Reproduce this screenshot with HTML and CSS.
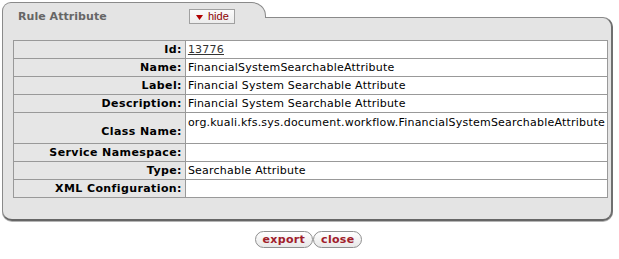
FILE: index.html
```html
<!DOCTYPE html>
<html>
<head>
<meta charset="utf-8">
<link rel="stylesheet" href="styles.css">
</head>
<body>
<div class="page">
  <div class="panel">
    <div class="tab">
      <span class="tab-title">Rule Attribute</span>
      <button class="hide-btn"><svg class="tri" width="7" height="5" viewBox="0 0 7 5"><polygon points="0,0 7,0 3.5,5" fill="#b00000"/></svg>hide</button>
    </div>
    <div class="panel-body">
      <table class="datatable">
        <tr><th>Id:</th><td><a href="#" class="link">13776</a></td></tr>
        <tr><th>Name:</th><td>FinancialSystemSearchableAttribute</td></tr>
        <tr><th>Label:</th><td>Financial System Searchable Attribute</td></tr>
        <tr><th>Description:</th><td>Financial System Searchable Attribute</td></tr>
        <tr class="tall"><th>Class Name:</th><td class="top">org.kuali.kfs.sys.document.workflow.FinancialSystemSearchableAttribute</td></tr>
        <tr><th>Service Namespace:</th><td></td></tr>
        <tr><th>Type:</th><td>Searchable Attribute</td></tr>
        <tr><th>XML Configuration:</th><td></td></tr>
      </table>
    </div>
  </div>
  <div class="actions">
    <button class="pill">export</button><button class="pill">close</button>
  </div>
</div>
</body>
</html>
```
FILE: styles.css
```css
html, body {
  margin: 0;
  padding: 0;
  background: #ffffff;
}
body {
  font-family: "DejaVu Sans", Verdana, sans-serif;
  font-size: 11px;
  color: #000;
}
.page {
  padding: 2px 0 0 2px;
  width: 611px;
}
.panel {
  display: flex;
  flex-direction: column;
}
.tab {
  position: relative;
  z-index: 1;
  width: 233px;
  height: 14px;
  margin-bottom: -1px;
  background: #e4e4e4;
  border: 1px solid #8a8a8a;
  border-bottom: none;
  border-radius: 9px 14px 0 0;
  display: flex;
  align-items: flex-start;
  padding: 0 14px 1px 15px;
}
.tab-title {
  font-weight: bold;
  color: #666666;
  font-size: 11px;
  margin-top: 7px;
  line-height: 14px;
  letter-spacing: 0.05px;
}
.hide-btn {
  margin-left: auto;
  margin-right: 16px;
  margin-top: 6px;
  height: 15px;
  width: 46px;
  padding: 0 0 0 6px;
  display: flex;
  align-items: center;
  gap: 5px;
  background: linear-gradient(#fbfbfb, #ececec);
  border: 1px solid #a0a0a0;
  font-family: "Liberation Sans", Arial, sans-serif;
  font-size: 11px;
  color: #8c0000;
  line-height: 13px;
}
.tri { display: block; margin-top: 1px; }
.panel-body {
  background: #e4e4e4;
  border: 1px solid #8a8a8a;
  border-right: 2px solid #6f6f6f;
  border-bottom: 2px solid #666;
  border-radius: 0 10px 10px 10px;
  padding: 22px 3px 21px 10px;
  box-shadow: 0 1px 0 #b5b5b5;
}
.datatable {
  border-collapse: collapse;
  width: 595px;
  border: 1px solid #999;
}
.datatable th, .datatable td {
  border: 1px solid #999;
  height: 17px;
  padding: 0 2px;
  line-height: 13px;
  white-space: nowrap;
  box-sizing: border-box;
}
.datatable tr { height: 18px; }
.datatable th {
  width: 172px;
  text-align: right;
  font-weight: bold;
  background: #e6e6e6;
  color: #000;
  padding-right: 3px;
  letter-spacing: 0.4px;
}
.datatable td {
  background: #fff;
  font-weight: normal;
  letter-spacing: 0.22px;
}
.datatable tr.tall { height: 31px; }
.datatable tr.tall th, .datatable tr.tall td {
  height: 31px;
}
.datatable tr.tall th {
  vertical-align: middle;
  padding-top: 6px;
}
.datatable td.top {
  vertical-align: top;
  padding-top: 3px;
}
.link {
  color: #333;
  text-decoration: underline;
}
.actions {
  display: flex;
  justify-content: center;
  margin-top: 10px;
  padding-left: 2px;
}
.pill {
  height: 17px;
  padding: 0 7px;
  border: 1px solid #8f8f8f;
  border-radius: 9px;
  background: linear-gradient(#ffffff, #e8e8e8);
  font-family: "DejaVu Sans", Verdana, sans-serif;
  font-weight: bold;
  font-size: 11px;
  color: #a0202a;
  line-height: 15px;
  letter-spacing: 0.3px;
  margin: 0;
}
```
